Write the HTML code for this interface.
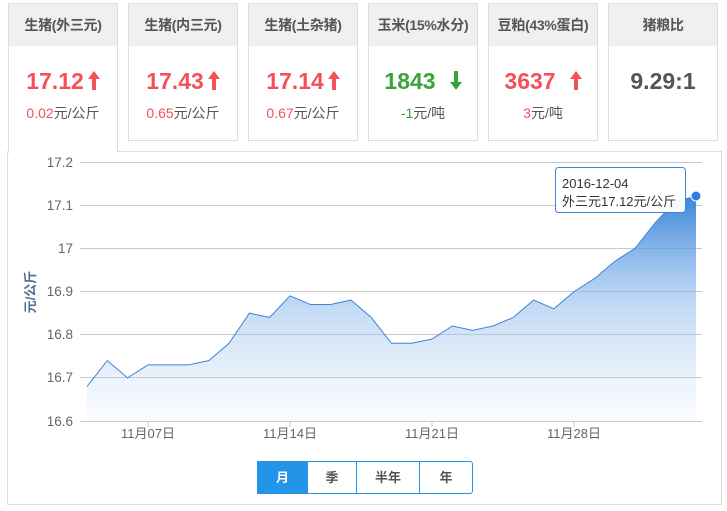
<!DOCTYPE html>
<html><head><meta charset="utf-8"><style>
*{margin:0;padding:0;box-sizing:border-box}
body{width:727px;height:511px;background:#fff;font-family:"Liberation Sans","Noto Sans CJK SC",sans-serif;position:relative;overflow:hidden}
.card{position:absolute;top:3px;width:110px;height:138px;border:1px solid #ddd;background:#fff;text-align:center}
.card .h{height:42px;background:#f0f0f0;font-size:14px;font-weight:bold;color:#555;line-height:42px;white-space:nowrap;letter-spacing:-0.3px}
.card .v{font-size:23px;font-weight:bold;margin-top:22px;line-height:26px;white-space:nowrap}
.card .v svg{vertical-align:-1px;margin-left:4px}
.card .s{font-size:14px;color:#555;margin-top:9px}
.r{color:#f5505a}.g{color:#3ba33b}
.card.a{height:150px;border-bottom:none;z-index:2}
.panel{position:absolute;left:7px;top:151px;width:715px;height:354px;border:1px solid #ddd}
.btns{position:absolute;left:257px;top:461px;height:33px;width:216px;border:1px solid #2394e8;border-radius:0 3px 3px 0;display:flex;font-size:13px;font-weight:bold;color:#555}
.btns div{line-height:31px;text-align:center;border-left:1px solid #2394e8}
</style></head><body>
<div class="panel"></div>
<div class="card a" style="left:8px"><div class="h">生猪(外三元)</div><div class="v r">17.12<svg width="12" height="19" viewBox="0 0 12 19"><path d="M6,0 L12,8 L8,8 L8,19 L4,19 L4,8 L0,8Z" fill="#f5505a"/></svg></div><div class="s"><span class="r">0.02</span>元/公斤</div></div>
<div class="card" style="left:128px"><div class="h">生猪(内三元)</div><div class="v r">17.43<svg width="12" height="19" viewBox="0 0 12 19"><path d="M6,0 L12,8 L8,8 L8,19 L4,19 L4,8 L0,8Z" fill="#f5505a"/></svg></div><div class="s"><span class="r">0.65</span>元/公斤</div></div>
<div class="card" style="left:248px"><div class="h">生猪(土杂猪)</div><div class="v r">17.14<svg width="12" height="19" viewBox="0 0 12 19"><path d="M6,0 L12,8 L8,8 L8,19 L4,19 L4,8 L0,8Z" fill="#f5505a"/></svg></div><div class="s"><span class="r">0.67</span>元/公斤</div></div>
<div class="card" style="left:368px"><div class="h">玉米(15%水分)</div><div class="v g">1843<svg width="12" height="19" viewBox="0 0 12 19" style="margin-left:14px"><path d="M6,19 L12,11 L8,11 L8,0 L4,0 L4,11 L0,11Z" fill="#3ba33b"/></svg></div><div class="s"><span class="g">-1</span>元/吨</div></div>
<div class="card" style="left:488px"><div class="h">豆粕(43%蛋白)</div><div class="v r">3637<svg width="12" height="19" viewBox="0 0 12 19" style="margin-left:14px"><path d="M6,0 L12,8 L8,8 L8,19 L4,19 L4,8 L0,8Z" fill="#f5505a"/></svg></div><div class="s"><span class="r">3</span>元/吨</div></div>
<div class="card" style="left:608px"><div class="h">猪粮比</div><div class="v" style="color:#555">9.29:1</div></div>
<svg width="727" height="511" style="position:absolute;left:0;top:0" font-family="Liberation Sans,Noto Sans CJK SC,sans-serif">
<defs>
<linearGradient id="gr2" gradientUnits="userSpaceOnUse" x1="0" y1="190" x2="0" y2="421"><stop offset="0" stop-color="#2f7fd8"/><stop offset="0.45" stop-color="#8ab7ec" stop-opacity="0.6"/><stop offset="1" stop-color="#c6dcf5" stop-opacity="0.1"/></linearGradient></defs>
<g stroke="#c8c8c8" stroke-width="1">
<line x1="80" y1="162.5" x2="702" y2="162.5"/><line x1="80" y1="205.5" x2="702" y2="205.5"/><line x1="80" y1="248.5" x2="702" y2="248.5"/><line x1="80" y1="291.5" x2="702" y2="291.5"/><line x1="80" y1="334.5" x2="702" y2="334.5"/><line x1="80" y1="377.5" x2="702" y2="377.5"/><line x1="80" y1="421.5" x2="702" y2="421.5" stroke="#c0c8d8"/>
<line x1="148" y1="421" x2="148" y2="427"/><line x1="290" y1="421" x2="290" y2="427"/><line x1="432" y1="421" x2="432" y2="427"/><line x1="574" y1="421" x2="574" y2="427"/>
</g>
<g font-size="13.5" fill="#666" text-anchor="end">
<text x="73" y="167">17.2</text><text x="73" y="210">17.1</text><text x="73" y="253">17</text><text x="73" y="296">16.9</text><text x="73" y="339">16.8</text><text x="73" y="382">16.7</text><text x="73" y="426">16.6</text></g>
<g font-size="13" fill="#666" text-anchor="middle"><text x="148" y="438">11月07日</text><text x="290" y="438">11月14日</text><text x="432" y="438">11月21日</text><text x="574" y="438">11月28日</text></g>
<text transform="translate(35,292) rotate(-90)" font-size="13" font-weight="bold" fill="#4d6c8f" text-anchor="middle">元/公斤</text>
<path fill="url(#gr2)" d="M87,386.5 L107.3,360.6 127.6,377.9 147.9,364.9 168.2,364.9 188.5,364.9 208.8,360.6 229.1,343.3 249.4,313.1 269.7,317.4 290,295.8 310.3,304.5 330.6,304.5 350.9,300.1 371.2,317.4 391.5,343.3 411.8,343.3 432.1,339 452.4,326 472.7,330.4 493,326 513.3,317.4 533.6,300.1 553.9,308.8 574.2,291.5 594.5,278.6 614.8,261.3 635.1,248.3 655.4,222.4 675.7,200.9 696,196.5 L696,421 L87,421Z"/>
<path fill="none" stroke="#3d86d6" stroke-width="1" d="M87,386.5 L107.3,360.6 127.6,377.9 147.9,364.9 168.2,364.9 188.5,364.9 208.8,360.6 229.1,343.3 249.4,313.1 269.7,317.4 290,295.8 310.3,304.5 330.6,304.5 350.9,300.1 371.2,317.4 391.5,343.3 411.8,343.3 432.1,339 452.4,326 472.7,330.4 493,326 513.3,317.4 533.6,300.1 553.9,308.8 574.2,291.5 594.5,278.6 614.8,261.3 635.1,248.3 655.4,222.4 675.7,200.9 696,196.5"/>
<circle cx="696" cy="196" r="5" fill="#2f7fd8" stroke="#fff" stroke-width="1"/>
<rect x="555.5" y="167.5" width="130" height="45" rx="3" fill="#fff" fill-opacity="0.95" stroke="#3d86d6"/>
<text x="562" y="188" font-size="13" fill="#333">2016-12-04</text>
<text x="562" y="206" font-size="13" fill="#333">外三元17.12元/公斤</text>
</svg>
<div class="btns"><div style="width:49px;background:#2394e8;color:#fff;border-left:none">月</div><div style="width:49px">季</div><div style="width:63px">半年</div><div style="width:53px">年</div></div>
</body></html>
